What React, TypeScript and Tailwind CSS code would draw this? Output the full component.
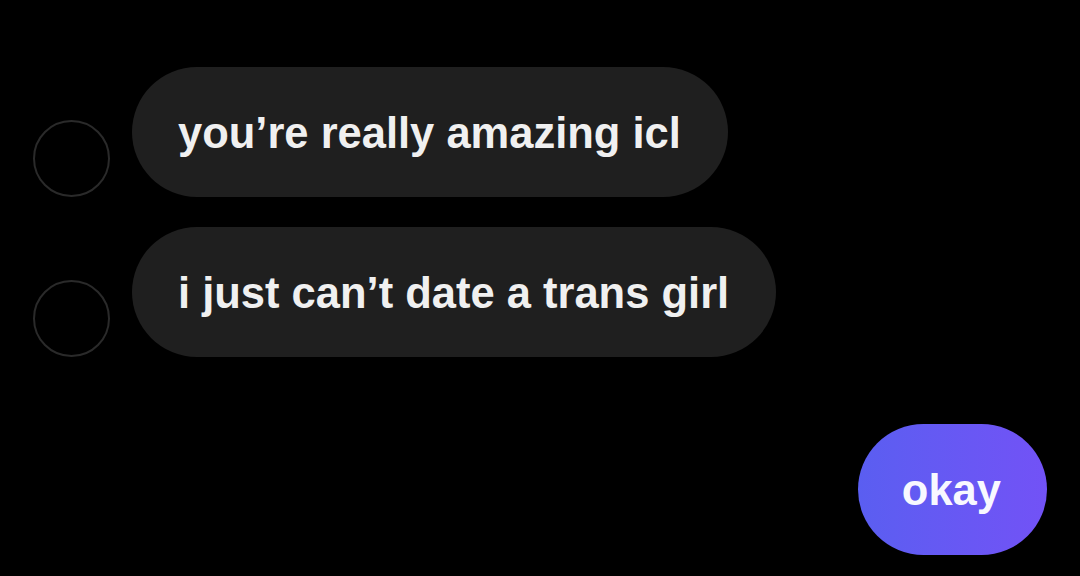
const font = { fontFamily: '"Liberation Sans", Arial, sans-serif' };

function Avatar() {
  return <div className="w-[77px] h-[77px] shrink-0 rounded-full border-2 border-[#2a2a2a] bg-black" />;
}

function Incoming({ text }: { text: string }) {
  return (
    <div className="flex items-end gap-[22px]">
      <Avatar />
      <div className="h-[130px] flex items-center rounded-full bg-[#1f1f1f] pl-[46px] pr-[47px]">
        <span className="text-[43.5px] font-bold text-[#f0f0f0] leading-none whitespace-nowrap pt-[3px]">{text}</span>
      </div>
    </div>
  );
}

export default function App() {
  return (
    <div className="w-[1080px] h-[576px] bg-black overflow-hidden flex flex-col pt-[67px] pl-[33px] pr-[33px]" style={font}>
      <div className="flex flex-col gap-[30px]">
        <Incoming text="you’re really amazing icl" />
        <Incoming text="i just can’t date a trans girl" />
      </div>
      <div className="flex justify-end mt-[67px]">
        <div className="h-[131px] flex items-center rounded-full bg-gradient-to-r from-[#5a5ef1] to-[#7252f6] pl-[44px] pr-[46px]">
          <span className="text-[43.5px] font-bold text-[#f8f8ff] leading-none pt-[3px]">okay</span>
        </div>
      </div>
    </div>
  );
}
